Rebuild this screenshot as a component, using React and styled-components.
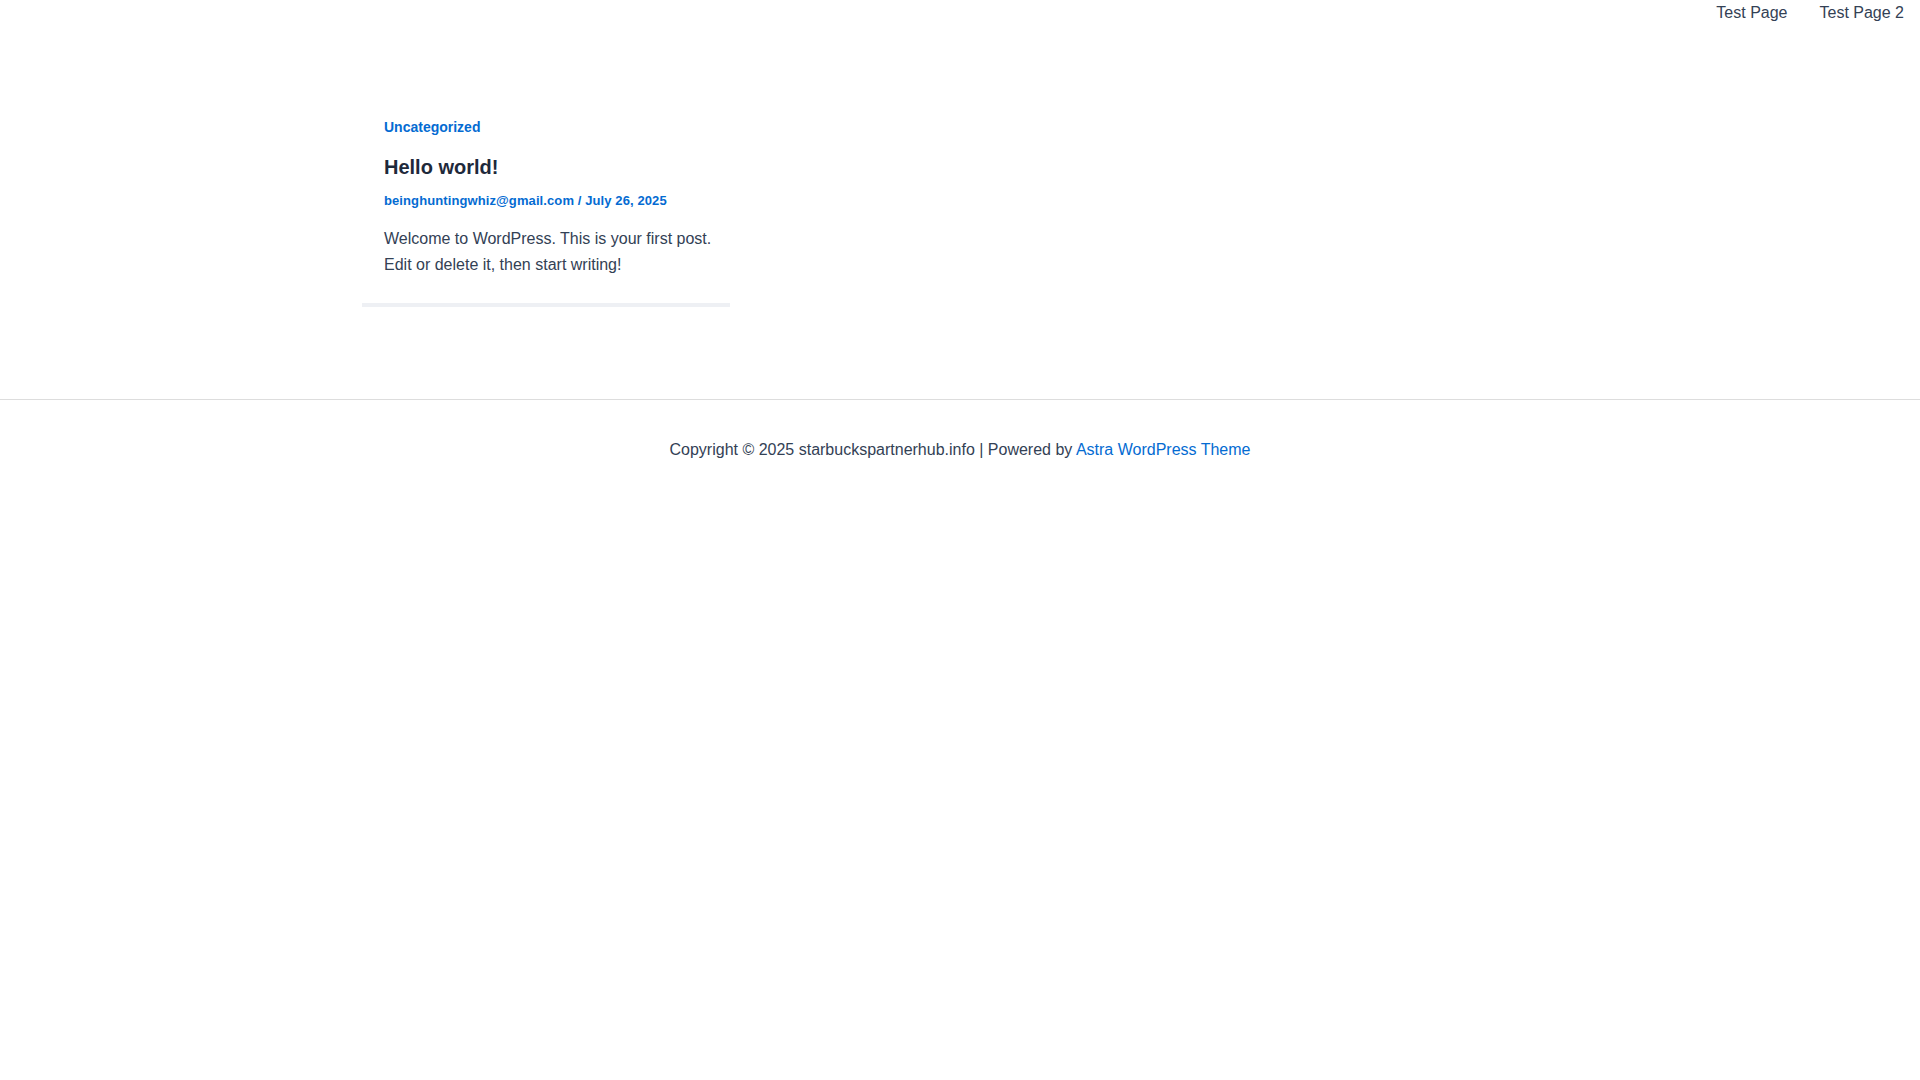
import * as React from "react"
import styled, { createGlobalStyle } from "styled-components"

const GlobalStyle = createGlobalStyle`
  html, body {
    margin: 0;
    padding: 0;
    background: #ffffff;
  }
  body {
    font-family: "Liberation Sans", Arial, sans-serif;
    color: #334155;
    font-size: 16px;
  }
`

const Page = styled.div`
  min-height: 1080px;
  display: flex;
  flex-direction: column;
`

const Header = styled.header`
  display: flex;
  justify-content: flex-end;
  height: 24px;
`

const NavLink = styled.a`
  padding: 1px 16px 0;
  font-size: 16px;
  line-height: 24px;
  color: #334155;
  text-decoration: none;
`

const Main = styled.main`
  padding: 64px 0 92px;
`

const Grid = styled.div`
  width: 1200px;
  margin: 0 auto;
  display: grid;
  grid-template-columns: repeat(3, 370px);
  gap: 45px;
`

const Card = styled.article`
  margin-left: 2px;
  padding: 28px 14px 26px 22px;
  border-bottom: 4px solid #eef0f4;
`

const Category = styled.a`
  display: block;
  font-size: 14px;
  line-height: 22.4px;
  font-weight: 700;
  color: #046bd2;
  text-decoration: none;
`

const Title = styled.h2`
  margin: 17px 0 0;
  font-size: 20px;
  line-height: 24px;
  font-weight: 700;
  color: #1e293b;
`

const Meta = styled.div`
  margin-top: 12px;
  font-size: 13px;
  line-height: 20.8px;
  font-weight: 700;
  letter-spacing: 0.1px;
  color: #046bd2;
`

const Excerpt = styled.p`
  margin: 14px 0 0;
  font-size: 16px;
  line-height: 25.6px;
  color: #334155;
`

const Footer = styled.footer`
  border-top: 1px solid #dddddd;
  padding: 37px 0;
  text-align: center;
  font-size: 16px;
  line-height: 25.6px;
  color: #334155;
`

const FooterLink = styled.a`
  color: #046bd2;
  text-decoration: none;
`

export default function App() {
  return (
    <Page>
      <GlobalStyle />
      <Header>
        <NavLink href="#">Test Page</NavLink>
        <NavLink href="#">Test Page 2</NavLink>
      </Header>
      <Main>
        <Grid>
          <Card>
            <Category href="#">Uncategorized</Category>
            <Title>Hello world!</Title>
            <Meta>beinghuntingwhiz@gmail.com / July 26, 2025</Meta>
            <Excerpt>
              Welcome to WordPress. This is your first post. Edit or delete it, then start writing!
            </Excerpt>
          </Card>
        </Grid>
      </Main>
      <Footer>
        Copyright © 2025 starbuckspartnerhub.info | Powered by{" "}
        <FooterLink href="#">Astra WordPress Theme</FooterLink>
      </Footer>
    </Page>
  )
}
